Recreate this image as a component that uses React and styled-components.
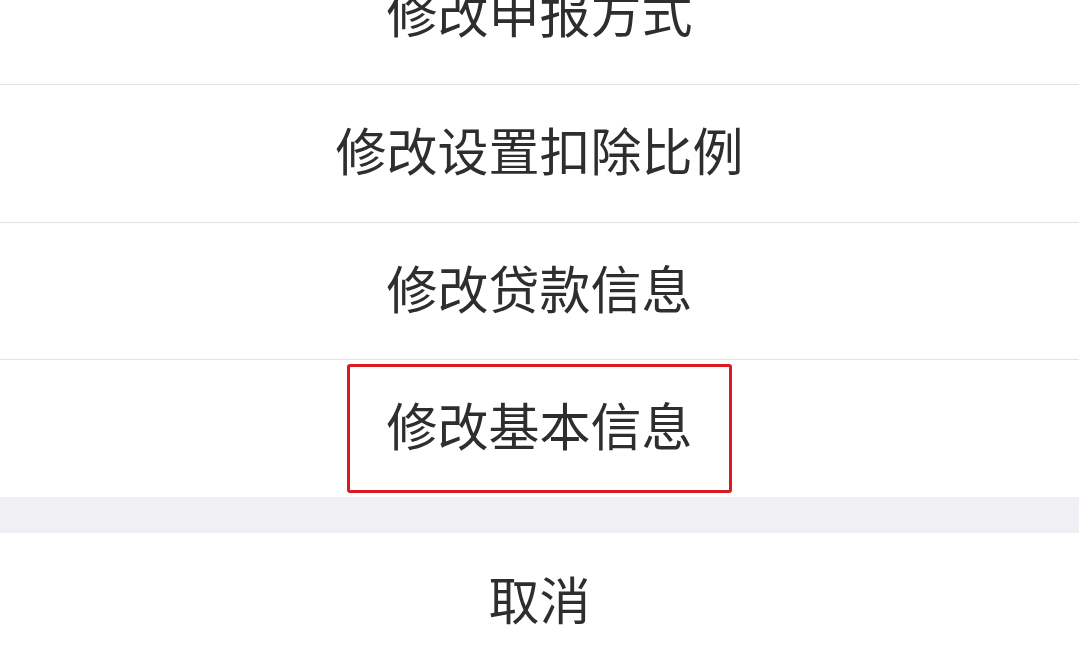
import React from "react";
import styled, { createGlobalStyle } from "styled-components";

const GlobalStyle = createGlobalStyle`
  html, body {
    margin: 0;
    padding: 0;
    background: #ffffff;
    overflow: hidden;
  }
  body {
    font-family: "Noto Sans CJK SC", "Noto Sans", sans-serif;
  }
`;

const items = ["修改申报方式", "修改设置扣除比例", "修改贷款信息", "修改基本信息"];

const Sheet = styled.div`
  width: 1079px;
  height: 724px;
  margin-top: -53px;
  display: flex;
  flex-direction: column;
  background: #ffffff;
`;

const Row = styled.div`
  box-sizing: border-box;
  height: ${(p) => (p.$last ? "137px" : "138px")};
  padding-bottom: 8px;
  display: flex;
  align-items: center;
  justify-content: center;
  border-bottom: ${(p) => (p.$last ? "none" : "1px solid #e2e2e4")};
  font-size: 51px;
  font-weight: 400;
  color: #2e2e2e;
  line-height: 1;
`;

const Highlight = styled.div`
  box-sizing: border-box;
  width: 385px;
  height: 129px;
  margin-bottom: -8px;
  padding-bottom: 8px;
  display: flex;
  align-items: center;
  justify-content: center;
  border: 3px solid #d91b22;
  border-radius: 3px;
`;

const Gap = styled.div`
  height: 36px;
  background: #efeff4;
`;

const Cancel = styled(Row)`
  height: 138px;
  border-bottom: none;
`;

export default function App() {
  return (
    <>
      <GlobalStyle />
      <Sheet>
        {items.map((label, i) => {
          const last = i === items.length - 1;
          return (
            <Row key={label} $last={last}>
              {last ? <Highlight>{label}</Highlight> : label}
            </Row>
          );
        })}
        <Gap />
        <Cancel>取消</Cancel>
      </Sheet>
    </>
  );
}
